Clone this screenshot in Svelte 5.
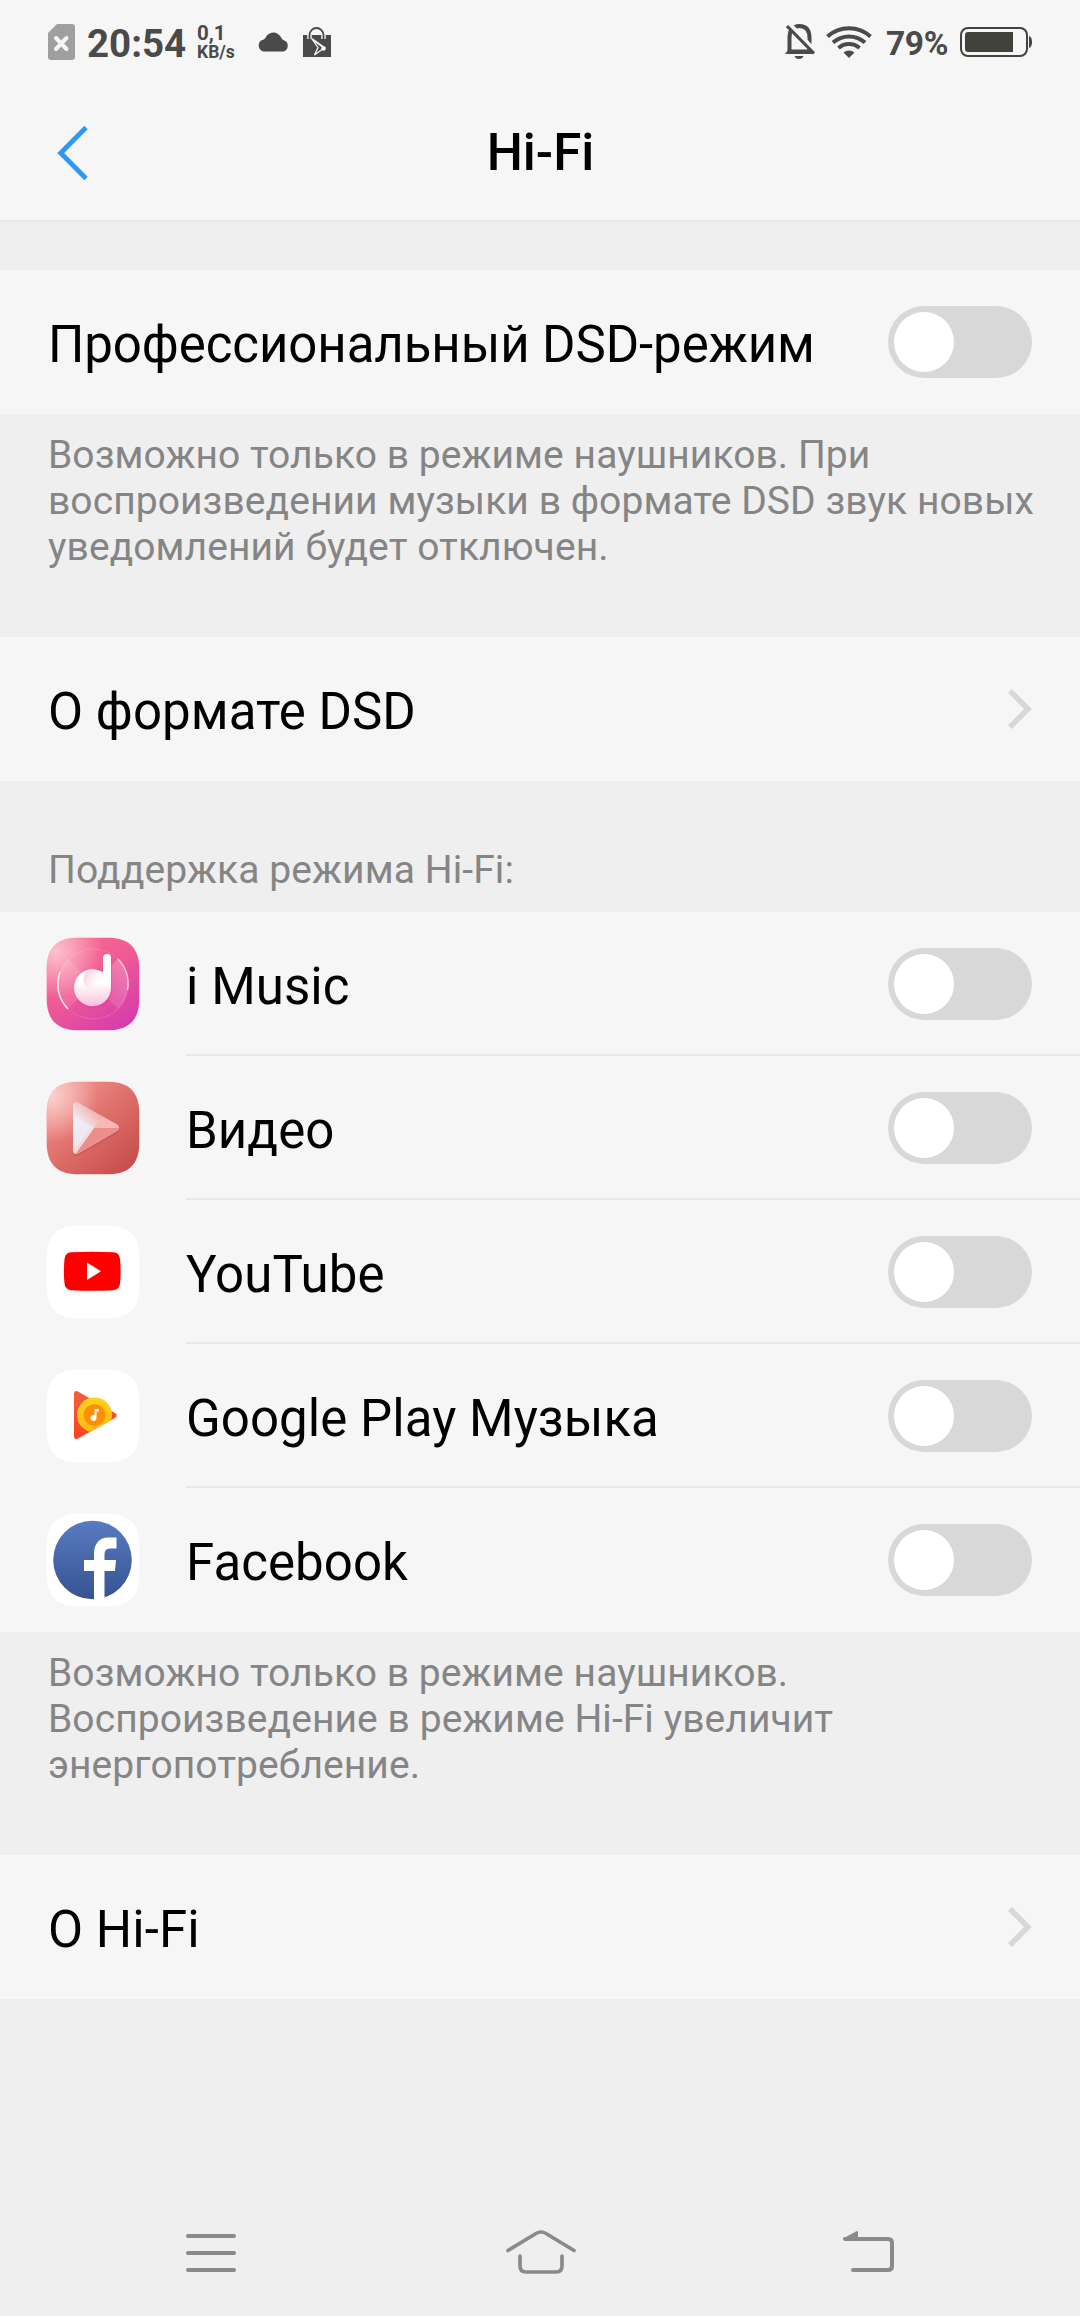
<script lang="ts">
  let dsdMode = $state(false);

  let apps = $state([
    { id: 'imusic', name: 'i Music', enabled: false },
    { id: 'video', name: 'Видео', enabled: false },
    { id: 'youtube', name: 'YouTube', enabled: false },
    { id: 'play-music', name: 'Google Play Музыка', enabled: false },
    { id: 'facebook', name: 'Facebook', enabled: false },
  ]);

  // rounded tile shared by all launcher icons
  const tile = 'M30 .7H64C83 1.500 92.500 11 93.300 30V64C92.500 83 83 92.500 64 93.300H30C11 92.500 1.500 83 .7 64V30C1.500 11 11 1.500 30 .7z';
  const note = 'M57 35.500V21a4 4 0 0 1 8 0V50A18.500 18.500 0 1 1 57 35.500z';
  const play = 'M27 24.500Q27 20 32 21.500L71 43.500Q75 47 71 50L32 72.500Q27.500 74 27 69z';
</script>

{#snippet toggle(on: boolean, label: string, flip: () => void)}
  <button class="toggle" class:on role="switch" aria-checked={on} aria-label={label} onclick={flip}>
    <span class="knob"></span>
  </button>
{/snippet}

{#snippet chevron()}
  <svg width="26" height="42" viewBox="0 0 26 42">
    <path d="M4 3 22 21 4 39" fill="none" stroke="#d8d8d8" stroke-width="5.500" />
  </svg>
{/snippet}

{#snippet appIcon(id: string)}
  <svg width="94" height="94" viewBox="0 0 94 94">
    {#if id === 'imusic'}
      <defs>
        <linearGradient id="im-bg" x1=".15" y1="0" x2=".85" y2="1">
          <stop offset="0" stop-color="#f8708f" />
          <stop offset=".45" stop-color="#f05a94" />
          <stop offset="1" stop-color="#d63aae" />
        </linearGradient>
        <radialGradient id="im-glow" cx=".1" cy=".15" r=".5">
          <stop offset="0" stop-color="#ffc4d2" stop-opacity=".95" />
          <stop offset="1" stop-color="#ffc4d2" stop-opacity="0" />
        </radialGradient>
        <linearGradient id="im-wing" x1="1" y1="0" x2="0" y2=".7">
          <stop offset="0" stop-color="#fff" stop-opacity=".25" />
          <stop offset="1" stop-color="#fff" stop-opacity=".05" />
        </linearGradient>
        <linearGradient id="im-note" x1="0" y1="0" x2="0" y2="1">
          <stop offset="0" stop-color="#fff" />
          <stop offset=".55" stop-color="#fff" />
          <stop offset="1" stop-color="#fac0dc" />
        </linearGradient>
        <linearGradient id="im-ball" x1="0" y1="0" x2="1" y2=".6">
          <stop offset="0" stop-color="#f9bed2" />
          <stop offset="1" stop-color="#fff" stop-opacity="0" />
        </linearGradient>
      </defs>
      <path d={tile} fill="url(#im-bg)" />
      <path d={tile} fill="url(#im-glow)" />
      <circle cx="47" cy="47" r="35" fill="none" stroke="#fff" stroke-opacity=".14" />
      <path d="M47 47 72 22A35 35 0 0 1 82 47 35 35 0 0 1 72 72z" fill="url(#im-wing)" />
      <path d="M47 47 22 72A35 35 0 0 1 12 47 35 35 0 0 1 22 22z" fill="#fff" fill-opacity=".12" />
      <path d="M22 72A35 35 0 0 1 14 35" fill="none" stroke="#fff" stroke-opacity=".85" stroke-width="1.500" />
      <path d="M72 22A35 35 0 0 1 81.500 53" fill="none" stroke="#fff" stroke-opacity=".65" stroke-width="1.500" />
      <path d={note} transform="translate(1 2)" fill="#cf2c7d" fill-opacity=".2" />
      <path d={note} fill="url(#im-note)" />
      <circle cx="48" cy="43" r="10.500" fill="url(#im-ball)" />
    {:else if id === 'video'}
      <defs>
        <linearGradient id="vd-bg" x1=".05" y1="0" x2=".95" y2="1">
          <stop offset="0" stop-color="#f39a96" />
          <stop offset=".5" stop-color="#de6e69" />
          <stop offset="1" stop-color="#c34949" />
        </linearGradient>
        <radialGradient id="vd-glow" cx=".06" cy=".15" r=".5">
          <stop offset="0" stop-color="#ffd6d3" stop-opacity=".9" />
          <stop offset="1" stop-color="#ffd6d3" stop-opacity="0" />
        </radialGradient>
        <linearGradient id="vd-left" gradientUnits="userSpaceOnUse" x1="30" y1="45" x2="48" y2="60">
          <stop offset="0" stop-color="#efedf5" />
          <stop offset=".5" stop-color="#efe9f1" />
          <stop offset="1" stop-color="#f5b8b6" />
        </linearGradient>
        <linearGradient id="vd-top" gradientUnits="userSpaceOnUse" x1="36" y1="45" x2="50" y2="32">
          <stop offset="0" stop-color="#efedf5" />
          <stop offset="1" stop-color="#f5b3b0" />
        </linearGradient>
        <clipPath id="vd-tri">
          <path d={play} />
        </clipPath>
      </defs>
      <path d={tile} fill="url(#vd-bg)" />
      <path d={tile} fill="url(#vd-glow)" />
      <path d={play} transform="translate(.5 2)" fill="#a93838" fill-opacity=".25" />
      <g clip-path="url(#vd-tri)">
        <path d="M20 15H80V80H20z" fill="url(#vd-top)" />
        <path d="M57 36 80 47H48z" fill="#f7b9b6" />
        <path d="M48 47H80V80H24z" fill="#ec8e8b" />
        <path d="M20 30 48 47 26 78H20z" fill="url(#vd-left)" />
      </g>
    {:else if id === 'youtube'}
      <path d={tile} fill="#fff" />
      <path
        d="M25 27.300Q46.300 26 67.500 27.300 73.500 27.800 74 34 75.300 46.500 74 58.500 73.500 64.500 67.500 65.200 46.300 66.500 25 65.200 19 64.500 18.500 58.500 17.300 46.500 18.500 34 19 27.800 25 27.300z"
        fill="#f00"
      />
      <path d="M41 37.500 55 46.200 41 55z" fill="#fff" />
    {:else if id === 'play-music'}
      <defs>
        <linearGradient id="pm-tri" x1="0" y1="0" x2="0" y2="1">
          <stop offset="0" stop-color="#f0603c" />
          <stop offset="1" stop-color="#fb4320" />
        </linearGradient>
        <linearGradient id="pm-disc" x1="0" y1="0" x2="0" y2="1">
          <stop offset="0" stop-color="#ffd21c" />
          <stop offset="1" stop-color="#fdb813" />
        </linearGradient>
        <clipPath id="pm-clip">
          <path d="M0 0H94V34L70.500 48.200 29 71.500V94H0z" />
        </clipPath>
      </defs>
      <path d={tile} fill="#fff" />
      <path d="M28 24.500Q28 21 31.500 22.200L69 44Q72.500 46.500 69 49L31.500 69.800Q28 71 28 67.500z" fill="url(#pm-tri)" />
      <g clip-path="url(#pm-clip)">
        <circle cx="48.500" cy="46" r="17.500" fill="url(#pm-disc)" />
      </g>
      <circle cx="48.500" cy="46" r="10.800" fill="#ff8f00" />
      <path d="M48.500 40H52.800V42.800H50.500V49A3 3 0 1 1 48.500 46.200z" fill="#fff" />
    {:else}
      <defs>
        <linearGradient id="fb-bg" x1="0" y1="0" x2="0" y2="1">
          <stop offset="0" stop-color="#587bc2" />
          <stop offset="1" stop-color="#35538f" />
        </linearGradient>
      </defs>
      <path d={tile} fill="#fff" />
      <circle cx="46.500" cy="47" r="39.300" fill="url(#fb-bg)" />
      <path
        d="M48 87V58H38V47H48V41C48 30 54 24.500 62 24.500H70.500V35.500H64.500C60.500 35.500 58.500 37.500 58.500 41.500V47H70L69 58H58.500V86z"
        fill="#fff"
      />
    {/if}
  </svg>
{/snippet}

<div class="screen">
  <div class="status-bar">
    <svg width="27" height="36" viewBox="0 0 27 36">
      <path d="M9 0H24Q27 0 27 3V33Q27 36 24 36H3Q0 36 0 33V9z" fill="#9f9f9f" />
      <path d="M8 14 18.500 25M18.500 14 8 25" stroke="#f6f6f6" stroke-width="4" stroke-linecap="round" />
    </svg>
    <span class="time">20:54</span>
    <span class="speed"><span class="rate">0,1</span><span>KB/s</span></span>
    <svg class="cloud" width="31" height="20" viewBox="0 0 31 20">
      <path d="M6 19.500A6 6 0 0 1 5 7.800C7 7.500 7 6 8.500 4A8.500 8.500 0 0 1 22.500 4.500C24 7 24 7.500 26 8.200A6 6 0 0 1 25.500 19.500z" fill="#4a4a4a" />
    </svg>
    <svg class="bag" width="28" height="30" viewBox="0 0 28 30">
      <path d="M0 8H28V30H0z" fill="#4a4a4a" />
      <path d="M6.500 12V8A7 7 0 0 1 20.500 8V12" fill="none" stroke="#f6f6f6" stroke-width="4.500" />
      <path d="M6.500 12V8A7 7 0 0 1 20.500 8V12" fill="none" stroke="#4a4a4a" stroke-width="1.800" />
      <path d="M9 12 21 21 11.500 28 15 20.500z" fill="none" stroke="#f6f6f6" stroke-width="1.300" />
      <path d="M9 12 22.500 21.500" stroke="#f6f6f6" stroke-width="1.600" />
      <circle cx="20.500" cy="21.500" r="2.200" fill="#f6f6f6" />
    </svg>

    <svg class="bell" width="30" height="36" viewBox="0 0 30 36">
      <path d="M4.500 28V14Q4.500 2 14.500 2T24.500 14V28" fill="none" stroke="#4a4a4a" stroke-width="4" />
      <path d="M0 30 3.500 25.500H26L29 30z" fill="#4a4a4a" />
      <path d="M3.500-1 31 28" stroke="#f6f6f6" stroke-width="4.500" />
      <path d="M2 2 29 29.500" stroke="#4a4a4a" stroke-width="3.200" />
      <path d="M9.500 32H18.500Q17.500 35 14 35T9.500 32z" fill="#4a4a4a" />
    </svg>
    <svg class="wifi" width="46" height="33" viewBox="0 0 46 33">
      <g fill="none" stroke="#4a4a4a" stroke-width="4">
        <path d="M1.500 10.500A32 32 0 0 1 44.500 10.500" />
        <path d="M7 16.500A24 24 0 0 1 39 16.500" />
        <path d="M12.500 22A16 16 0 0 1 33.500 22" />
      </g>
      <path d="M17.500 26.500Q23 22.500 28.500 26.500L23 32z" fill="#4a4a4a" />
    </svg>
    <span class="percent">79%</span>
    <svg class="battery" width="72" height="30" viewBox="0 0 72 30">
      <rect x="1" y="1" width="66" height="28" rx="7" fill="none" stroke="#42423e" stroke-width="2" />
      <path d="M8 5H53V25H8Q5 25 5 22V8Q5 5 8 5z" fill="#42423c" />
      <path d="M69 9Q72 10 72 15T69 21z" fill="#42423e" />
    </svg>
  </div>

  <header class="title-bar">
    <button class="back" aria-label="Назад">
      <svg width="33" height="57" viewBox="0 0 33 57">
        <path d="M30 3.500 4.700 29 30 54.500" fill="none" stroke="#2f98f3" stroke-width="4.800" />
      </svg>
    </button>
    <h1>Hi-Fi</h1>
  </header>

  <main>
    <div class="row">
      <span class="label long">Профессиональный DSD-режим</span>
      {@render toggle(dsdMode, 'DSD', () => (dsdMode = !dsdMode))}
    </div>
    <p class="note">
      Возможно только в режиме наушников. При<br />
      воспроизведении музыки в формате DSD звук новых<br />
      уведомлений будет отключен.
    </p>

    <div class="row">
      <span class="label">О формате DSD</span>
      {@render chevron()}
    </div>

    <h2 class="section-title">Поддержка режима Hi-Fi:</h2>
    <div class="apps">
      {#each apps as app (app.id)}
        <div class="app-row">
          {@render appIcon(app.id)}
          <div class="app-body">
            <span class="label">{app.name}</span>
            {@render toggle(app.enabled, app.name, () => (app.enabled = !app.enabled))}
          </div>
        </div>
      {/each}
    </div>
    <p class="note">
      Возможно только в режиме наушников.<br />
      Воспроизведение в режиме Hi-Fi увеличит<br />
      энергопотребление.
    </p>

    <div class="row">
      <span class="label">О Hi-Fi</span>
      {@render chevron()}
    </div>
  </main>

  <nav class="nav-bar">
    <svg width="50" height="44" viewBox="0 0 50 44">
      <path d="M2 6H48M2 23H48M2 40H48" stroke="#8a8a8a" stroke-width="4" stroke-linecap="round" />
    </svg>
    <svg class="home" width="72" height="46" viewBox="0 0 72 46">
      <g fill="none" stroke="#8a8a8a" stroke-width="3.700" stroke-linecap="round">
        <path d="M3 21.500 31 4.500Q36 1.500 41 4.500L69 21.500" />
        <path d="M15 27V37Q15 43 21 43H51Q57 43 57 37V27" />
      </g>
    </svg>
    <svg width="52" height="44" viewBox="0 0 52 44">
      <path d="M2 9H45Q49 9 49 13V36Q49 40 45 40H10" fill="none" stroke="#8a8a8a" stroke-width="4" stroke-linecap="round" />
      <path d="M0 8.500 13 1.500Q15 .5 15 2V9H1z" fill="#8a8a8a" />
    </svg>
  </nav>
</div>

<style>
  :global(body) {
    background: #efefef;
  }

  .screen {
    display: flex;
    flex-direction: column;
    height: 2316px;
    background: #efefef;
    font-family: Roboto, 'Noto Sans', sans-serif;
    color: #000;
  }

  svg {
    display: block;
    flex: none;
  }

  button {
    border: 0;
    padding: 0;
    background: none;
  }

  .status-bar {
    display: flex;
    align-items: center;
    height: 84px;
    padding: 0 48px;
    background: #f6f6f6;
    color: #4a4a4a;
    font-weight: 700;
    white-space: nowrap;
  }

  .time {
    width: 98px;
    margin: 3px 0 0 12px;
    font-size: 38.5px;
    line-height: 46px;
  }

  .speed {
    display: flex;
    flex-direction: column;
    width: 40px;
    margin: 1px 0 0 12px;
    font-size: 17.5px;
    line-height: 18px;
  }

  .rate {
    font-size: 20.5px;
    line-height: 19px;
  }

  .cloud {
    margin-left: 21px;
  }

  .bag {
    margin-left: 14px;
  }

  .bell {
    margin-left: auto;
  }

  .wifi {
    margin-left: 11px;
  }

  .percent {
    width: 62px;
    margin: 3px 0 0 14px;
    font-size: 33.5px;
    letter-spacing: -0.4px;
    line-height: 40px;
  }

  .battery {
    margin-left: 12px;
  }

  .title-bar {
    display: grid;
    grid-template-columns: 56px 1fr 56px;
    align-items: center;
    box-sizing: border-box;
    height: 138px;
    padding: 0 56px;
    border-bottom: 2px solid #e8e8e8;
    background: #f6f6f6;
  }

  h1 {
    margin: 0;
    padding: 2px 0 0 1px;
    font-size: 51px;
    font-weight: 500;
    line-height: 60px;
    text-align: center;
  }

  main {
    padding-top: 48px;
  }

  .row {
    display: flex;
    align-items: center;
    justify-content: space-between;
    height: 144px;
    padding: 0 48px;
    background: #f6f6f6;
  }

  .label {
    padding-top: 6px;
    font-size: 51px;
    letter-spacing: 0.06px;
    line-height: 60px;
    white-space: nowrap;
  }

  .label.long {
    letter-spacing: -0.08px;
  }

  .toggle {
    flex: none;
    box-sizing: border-box;
    width: 144px;
    height: 72px;
    padding: 6px;
    border-radius: 36px;
    background: #d8d8d8;
  }

  .knob {
    display: block;
    width: 60px;
    height: 60px;
    border-radius: 50%;
    background: #fff;
  }

  .toggle.on {
    background: #2f98f3;
  }

  .toggle.on .knob {
    margin-left: auto;
  }

  .note {
    box-sizing: border-box;
    height: 223px;
    margin: 0;
    padding: 18px 48px 0;
    color: #858585;
    font-size: 39px;
    letter-spacing: 0.07px;
    line-height: 46px;
    white-space: nowrap;
  }

  .section-title {
    box-sizing: border-box;
    height: 131px;
    margin: 0;
    padding: 66px 48px 0;
    color: #858585;
    font-size: 39px;
    font-weight: 400;
    letter-spacing: 0.1px;
    line-height: 46px;
  }

  .app-row {
    display: flex;
    align-items: center;
    height: 144px;
    padding-left: 46px;
    background: #f6f6f6;
  }

  .app-body {
    display: flex;
    flex: 1;
    align-items: center;
    justify-content: space-between;
    box-sizing: border-box;
    height: 144px;
    margin-left: 46px;
    padding: 2px 48px 0 0;
    border-bottom: 2px solid #e8e8e8;
  }

  .app-row:last-child .app-body {
    border-bottom-color: transparent;
  }

  .nav-bar {
    display: flex;
    align-items: center;
    height: 128px;
    margin-top: auto;
    padding-left: 186px;
  }

  .home {
    margin: 0 266px 0 269px;
  }
</style>
